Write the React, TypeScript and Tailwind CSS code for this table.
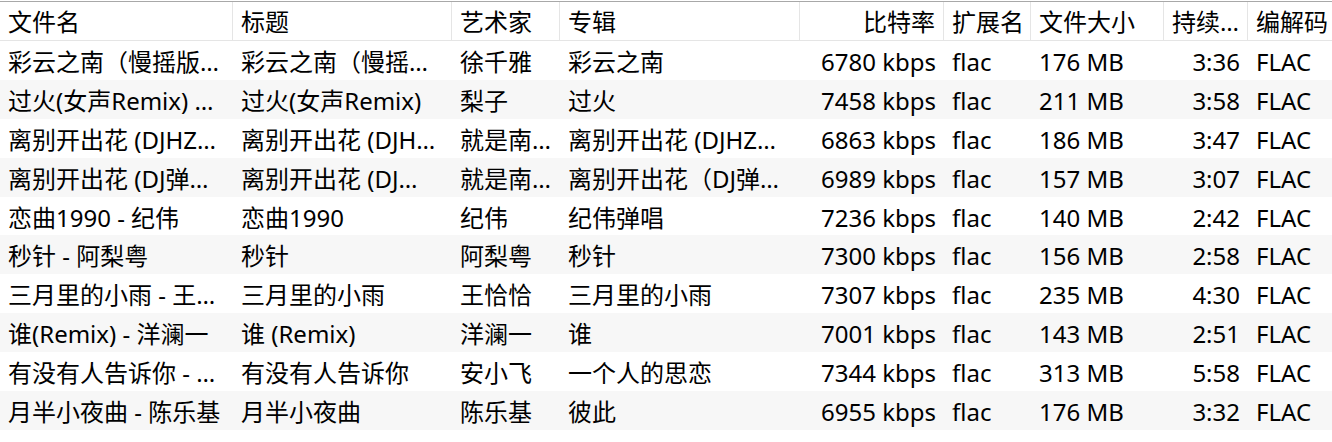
import React from "react";

const cols = [
  { name: "文件名", align: "left" },
  { name: "标题", align: "left" },
  { name: "艺术家", align: "left" },
  { name: "专辑", align: "left" },
  { name: "比特率", align: "right" },
  { name: "扩展名", align: "left" },
  { name: "文件大小", align: "left" },
  { name: "持续…", align: "right" },
  { name: "编解码", align: "left" },
];

const rows: string[][] = [
  ["彩云之南（慢摇版…", "彩云之南（慢摇…", "徐千雅", "彩云之南", "6780 kbps", "flac", "176 MB", "3:36", "FLAC"],
  ["过火(女声Remix) …", "过火(女声Remix)", "梨子", "过火", "7458 kbps", "flac", "211 MB", "3:58", "FLAC"],
  ["离别开出花 (DJHZ…", "离别开出花 (DJH…", "就是南…", "离别开出花 (DJHZ…", "6863 kbps", "flac", "186 MB", "3:47", "FLAC"],
  ["离别开出花 (DJ弹…", "离别开出花 (DJ…", "就是南…", "离别开出花（DJ弹…", "6989 kbps", "flac", "157 MB", "3:07", "FLAC"],
  ["恋曲1990 - 纪伟", "恋曲1990", "纪伟", "纪伟弹唱", "7236 kbps", "flac", "140 MB", "2:42", "FLAC"],
  ["秒针 - 阿梨粤", "秒针", "阿梨粤", "秒针", "7300 kbps", "flac", "156 MB", "2:58", "FLAC"],
  ["三月里的小雨 - 王…", "三月里的小雨", "王恰恰", "三月里的小雨", "7307 kbps", "flac", "235 MB", "4:30", "FLAC"],
  ["谁(Remix) - 洋澜一", "谁 (Remix)", "洋澜一", "谁", "7001 kbps", "flac", "143 MB", "2:51", "FLAC"],
  ["有没有人告诉你 - …", "有没有人告诉你", "安小飞", "一个人的思恋", "7344 kbps", "flac", "313 MB", "5:58", "FLAC"],
  ["月半小夜曲 - 陈乐基", "月半小夜曲", "陈乐基", "彼此", "6955 kbps", "flac", "176 MB", "3:32", "FLAC"],
];

const grid =
  "grid grid-cols-[233px_219px_108px_240px_144px_87px_133px_84px_84px]";

export default function App() {
  return (
    <div
      className="w-[1332px] h-[442px] bg-white text-black text-[24px] leading-none overflow-hidden pt-px"
      style={{ fontFamily: '"Noto Sans", "Noto Sans CJK SC", sans-serif' }}
    >
      <div className={`${grid} h-[40px] border-t border-b border-t-[#a8a8a8] border-b-[#e5e5e5]`}>
        {cols.map((c, i) => (
          <div
            key={i}
            className={`flex items-center px-2 pt-[2px] whitespace-nowrap overflow-hidden border-r border-[#e5e5e5] ${
              c.align === "right" ? "justify-end" : "justify-start"
            } ${i === cols.length - 1 ? "border-r-0" : ""}`}
          >
            {c.name}
          </div>
        ))}
      </div>
      {rows.map((r, ri) => (
        <div
          key={ri}
          className={`${grid} h-[38.9px] ${ri % 2 === 1 ? "bg-[#f7f7f7]" : "bg-white"}`}
        >
          {r.map((cell, ci) => (
            <div
              key={ci}
              className={`flex items-center px-2 pt-[3px] whitespace-nowrap overflow-hidden ${
                cols[ci].align === "right" ? "justify-end" : "justify-start"
              }`}
            >
              {cell}
            </div>
          ))}
        </div>
      ))}
    </div>
  );
}
